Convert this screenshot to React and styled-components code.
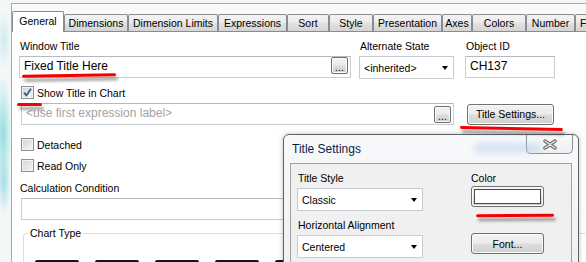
import React from 'react';
import styled, { createGlobalStyle } from 'styled-components';

const ui = `'Liberation Sans', Arial, sans-serif`;

const GlobalStyle = createGlobalStyle`
  html, body {
    margin: 0;
    padding: 0;
  }
  body {
    background: #f3f7f8;
    font-family: ${ui};
    color: #000;
  }
  * {
    box-sizing: border-box;
  }
`;

const tabs = [
  { label: 'General', w: 52 },
  { label: 'Dimensions', w: 64 },
  { label: 'Dimension Limits', w: 90 },
  { label: 'Expressions', w: 69 },
  { label: 'Sort', w: 42 },
  { label: 'Style', w: 44 },
  { label: 'Presentation', w: 69 },
  { label: 'Axes', w: 30 },
  { label: 'Colors', w: 54 },
  { label: 'Number', w: 49 },
  { label: 'F', w: 14, cut: true },
];

const marks = [
  { x: 22, y: 74, w: 94, rot: -1 },
  { x: 17, y: 103, w: 25, rot: 0 },
  { x: 460, y: 127, w: 103, rot: 1.2 },
  { x: 476, y: 214, w: 78, rot: -0.4 },
];

const CheckMark = () => (
  <svg width='11' height='11' viewBox='0 0 11 11'>
    <path d='M2 5.6 L4.4 8.4 L9 1.8' fill='none' stroke='#3b5590' strokeWidth='1.8' />
  </svg>
);

const CloseGlyph = () => (
  <svg width='14' height='11' viewBox='0 0 14 11'>
    <path d='M2 2 L12 9 M12 2 L2 9' stroke='#6a6a6a' strokeWidth='3.4' strokeLinecap='round' />
    <path d='M2 2 L12 9 M12 2 L2 9' stroke='#ededed' strokeWidth='1.3' strokeLinecap='round' />
  </svg>
);

const App = () => {
  return (
    <>
      <GlobalStyle />
      <Desktop>
        <Window>
          <TabStrip>
            {tabs.map((t, i) => (
              <Tab key={t.label} $w={t.w} $active={i === 0} $cut={t.cut}>
                {t.label}
              </Tab>
            ))}
          </TabStrip>
          <TabPage>
            <TopRow>
              <Field>
                <Label>Window Title</Label>
                <TextBox $w={332}>
                  <Value>Fixed Title Here</Value>
                  <DotsButton>...</DotsButton>
                </TextBox>
              </Field>
              <Field $ml={8}>
                <Label>Alternate State</Label>
                <Select $w={95}>
                  &lt;inherited&gt;
                  <Arrow />
                </Select>
              </Field>
              <Field $ml={11}>
                <Label>Object ID</Label>
                <TextBox $w={90}>
                  <Value>CH137</Value>
                </TextBox>
              </Field>
            </TopRow>

            <CheckRow $mt={7}>
              <CheckBox>
                <CheckMark />
              </CheckBox>
              Show Title in Chart
            </CheckRow>

            <ExprRow>
              <TextBox $w={433} $ml={2}>
                <Value $muted>&lt;use first expression label&gt;</Value>
                <DotsButton $mt={2}>...</DotsButton>
              </TextBox>
              <PushButton $w={87} $ml={13}>
                Title Settings...
              </PushButton>
            </ExprRow>

            <CheckRow $mt={13}>
              <CheckBox />
              Detached
            </CheckRow>
            <CheckRow $mt={8}>
              <CheckBox />
              Read Only
            </CheckRow>

            <Label $mt={10}>Calculation Condition</Label>
            <TextBox $w={545} $ml={2} />

            <GroupBox>
              <legend>Chart Type</legend>
              <ChartRow>
                {[0, 1, 2, 3, 4, 5].map((n) => (
                  <ChartIcon key={n} />
                ))}
              </ChartRow>
            </GroupBox>
          </TabPage>
        </Window>

        <Dialog>
          <TitleBar>
            <DialogTitle>Title Settings</DialogTitle>
            <Ghost aria-hidden='true' />
            <CloseButton>
              <CloseGlyph />
            </CloseButton>
          </TitleBar>
          <Client>
            <Column $w={126}>
              <Label>Title Style</Label>
              <Select $w={126}>
                Classic
                <Arrow />
              </Select>
              <Label $mt={8}>Horizontal Alignment</Label>
              <Select $w={126}>
                Centered
                <Arrow />
              </Select>
            </Column>
            <Column $w={73}>
              <Label $ml={0}>Color</Label>
              <ColorButton>
                <Swatch />
              </ColorButton>
              <PushButton $w={73} $mt={26}>
                Font...
              </PushButton>
            </Column>
          </Client>
        </Dialog>

        {marks.map((m, i) => (
          <Scribble key={i} $x={m.x} $y={m.y} $w={m.w} $rot={m.rot} />
        ))}
      </Desktop>
    </>
  );
};

export default App;

const Desktop = styled.div`
  position: relative;
  width: 586px;
  height: 262px;
  overflow: hidden;
  padding: 3px 0 0 11px;
  background:
    radial-gradient(ellipse 9px 60px at 3px 135px, rgba(70, 200, 200, 0.55), transparent),
    radial-gradient(ellipse 7px 30px at 4px 185px, rgba(90, 200, 210, 0.45), transparent),
    radial-gradient(ellipse 7px 30px at 4px 40px, rgba(140, 215, 220, 0.35), transparent),
    #f3f7f8;
`;

const Window = styled.div`
  display: flex;
  flex-direction: column;
  height: 259px;
  border-top: 1px solid #a7a9ad;
  border-left: 1px solid #a7a9ad;
  background: #f9f9f9;
`;

const TabStrip = styled.div`
  flex: none;
  display: flex;
  align-items: flex-end;
  height: 27px;
  white-space: nowrap;
`;

const Tab = styled.div`
  position: relative;
  z-index: ${({ $active }) => ($active ? 1 : 0)};
  flex: none;
  width: ${({ $w }) => $w}px;
  height: ${({ $active }) => ($active ? 21 : 17)}px;
  margin-bottom: ${({ $active }) => ($active ? -1 : 0)}px;
  display: flex;
  align-items: center;
  justify-content: ${({ $cut }) => ($cut ? 'flex-start' : 'center')};
  padding: 0 0 ${({ $active }) => ($active ? 1 : 0)}px ${({ $cut }) => ($cut ? 4 : 0)}px;
  border: 1px solid #898c95;
  border-bottom: none;
  border-radius: 2px 2px 0 0;
  background: ${({ $active }) =>
    $active
      ? '#fff'
      : 'linear-gradient(#f3f3f3, #ececec 45%, #e0e0e0 55%, #d4d4d4)'};
  font-size: 10.5px;
  line-height: 13px;
`;

const TabPage = styled.div`
  flex: 1;
  min-height: 0;
  overflow: hidden;
  border-top: 1px solid #898c95;
  background: #fff;
  padding: 8px 0 0 7px;
`;

const TopRow = styled.div`
  display: flex;
  align-items: flex-start;
`;

const Field = styled.div`
  display: flex;
  flex-direction: column;
  margin-left: ${({ $ml }) => $ml || 0}px;
`;

const Label = styled.div`
  height: 13px;
  margin: ${({ $mt }) => $mt || 0}px 0 3px ${({ $ml }) => ($ml === undefined ? 1 : $ml)}px;
  font-size: 10.5px;
  line-height: 13px;
  white-space: nowrap;
`;

const TextBox = styled.div`
  display: flex;
  align-items: flex-start;
  width: ${({ $w }) => $w}px;
  height: 22px;
  margin-left: ${({ $ml }) => $ml || 0}px;
  padding: 0 2px 0 4px;
  border: 1px solid #c9ced6;
  border-top-color: #b5b9c1;
  background: #fff;
  font-size: 12px;
`;

const Value = styled.span`
  flex: 1;
  padding-top: 2px;
  line-height: 15px;
  color: ${({ $muted }) => ($muted ? '#a3a3a3' : '#000')};
  white-space: nowrap;
  overflow: hidden;
`;

const buttonFace = `
  border: 1px solid #707070;
  border-radius: 3px;
  background: linear-gradient(#f2f2f2, #ebebeb 48%, #dddddd 52%, #cfcfcf);
  box-shadow: inset 0 0 0 1px #fbfbfb;
`;

const DotsButton = styled.div`
  ${buttonFace}
  flex: none;
  width: 17px;
  height: 17px;
  margin-top: ${({ $mt }) => $mt || 0}px;
  display: flex;
  align-items: flex-end;
  justify-content: center;
  padding-bottom: 2px;
  border-radius: 2px;
  font-size: 10.5px;
  line-height: 8px;
`;

const PushButton = styled.div`
  ${buttonFace}
  width: ${({ $w }) => $w}px;
  height: 21px;
  margin: ${({ $mt }) => $mt || 0}px 0 0 ${({ $ml }) => $ml || 0}px;
  display: flex;
  align-items: center;
  justify-content: center;
  font-size: 10.5px;
  white-space: nowrap;
`;

const Select = styled.div`
  display: flex;
  align-items: center;
  width: ${({ $w }) => $w}px;
  height: 23px;
  padding: 0 5px 0 4px;
  border: 1px solid #c8cbd0;
  background: #fff;
  font-size: 10.5px;
  white-space: nowrap;
`;

const Arrow = styled.span`
  margin-left: auto;
  width: 0;
  height: 0;
  border-left: 3.5px solid transparent;
  border-right: 3.5px solid transparent;
  border-top: 4px solid #000;
`;

const CheckRow = styled.div`
  display: flex;
  align-items: center;
  gap: 3px;
  height: 13px;
  margin: ${({ $mt }) => $mt || 0}px 0 0 2px;
  font-size: 10.5px;
`;

const CheckBox = styled.div`
  flex: none;
  width: 13px;
  height: 13px;
  display: flex;
  align-items: center;
  justify-content: center;
  border: 1px solid #8e8f8f;
  background: linear-gradient(135deg, #cfd2d6, #f7f7f7);
  box-shadow: inset 0 0 0 1px #f3f3f3;
`;

const ExprRow = styled.div`
  display: flex;
  align-items: center;
  margin-top: 4px;
`;

const GroupBox = styled.fieldset`
  width: 600px;
  height: 60px;
  margin: 7px 0 0 4px;
  padding: 0 4px;
  min-width: 0;
  border: 1px solid #d5dfe5;
  border-radius: 3px;

  legend {
    padding: 0 2px;
    font-size: 10.5px;
    line-height: 13px;
  }
`;

const ChartRow = styled.div`
  display: flex;
  gap: 16px;
  margin: 20px 0 0 7px;
`;

const ChartIcon = styled.div`
  width: 44px;
  height: 30px;
  border: 2px solid #151515;
  border-radius: 2px;
  background: #fff;
`;

const Dialog = styled.div`
  position: absolute;
  left: 283px;
  top: 134px;
  width: 296px;
  height: 140px;
  display: flex;
  flex-direction: column;
  padding: 0 6px;
  border: 1px solid #5f6266;
  border-radius: 6px 6px 0 0;
  background: linear-gradient(#f8f9fb, #eef1f4);
  box-shadow: 0 0 5px rgba(0, 0, 0, 0.25);
`;

const TitleBar = styled.div`
  position: relative;
  flex: none;
  display: flex;
  align-items: flex-start;
  height: 28px;
`;

const DialogTitle = styled.div`
  margin: 7px 0 0 2px;
  font-size: 12px;
  line-height: 14px;
  color: #0f1d40;
`;

/* blurry reflection of the button behind the glass frame */
const Ghost = styled.span`
  position: absolute;
  left: 184px;
  top: 8px;
  width: 66px;
  height: 10px;
  border-radius: 5px;
  background: rgba(170, 200, 235, 0.45);
  filter: blur(3px);
`;

const CloseButton = styled.div`
  margin-left: auto;
  margin-right: -1px;
  width: 47px;
  height: 19px;
  display: flex;
  align-items: center;
  justify-content: center;
  border: 1px solid #8c8f94;
  border-top: none;
  border-radius: 0 0 5px 5px;
  background: linear-gradient(#fbfbfb, #eceef0);
`;

const Client = styled.div`
  flex: 1;
  display: flex;
  gap: 48px;
  padding: 8px 0 0 6px;
  border: 1px solid #a0a0a0;
  background: #f0f0f0;
`;

const Column = styled.div`
  display: flex;
  flex-direction: column;
  width: ${({ $w }) => $w}px;
`;

const ColorButton = styled.div`
  ${buttonFace}
  width: 73px;
  height: 21px;
  margin-top: -2px;
  padding: 2px;
`;

const Swatch = styled.div`
  height: 100%;
  border: 1px solid #4a4a4a;
  background: #fff;
`;

const Scribble = styled.div`
  position: absolute;
  left: ${({ $x }) => $x}px;
  top: ${({ $y }) => $y}px;
  width: ${({ $w }) => $w}px;
  height: 3px;
  border-radius: 2px;
  background: #f40000;
  box-shadow: 2px 4px 3px rgba(40, 40, 40, 0.45);
  transform: rotate(${({ $rot }) => $rot}deg);
`;
